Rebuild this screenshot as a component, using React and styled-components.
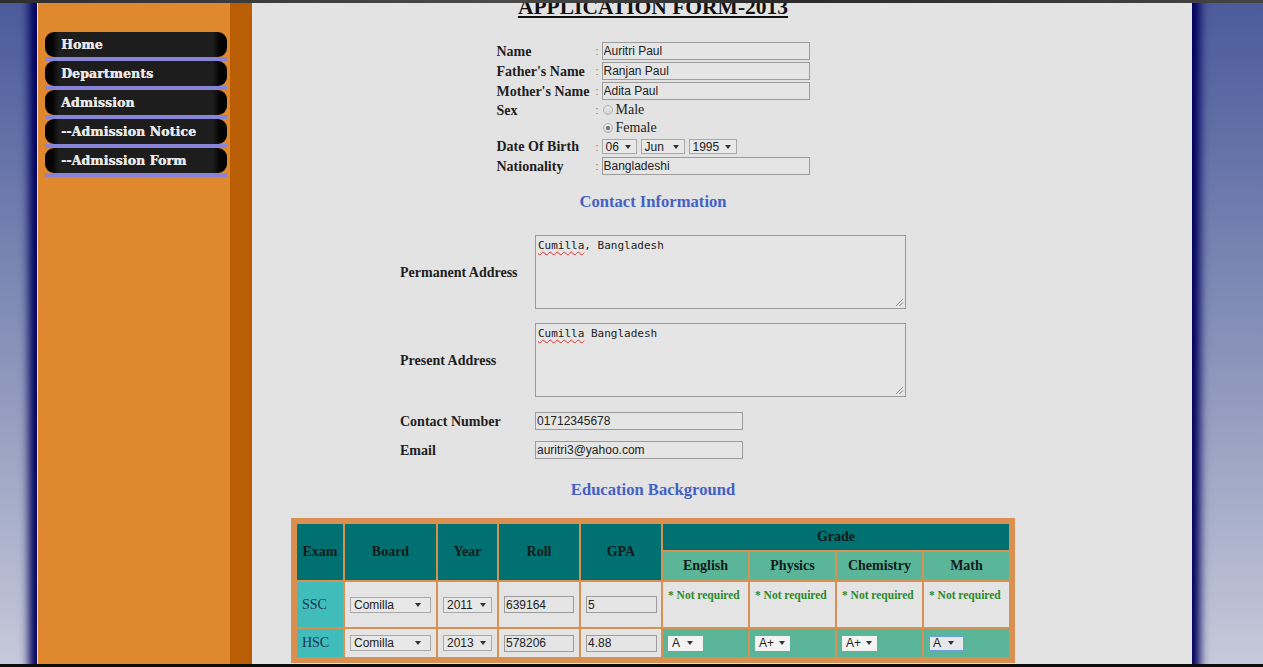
import React from 'react';
import styled, { createGlobalStyle } from 'styled-components';

const GlobalStyle = createGlobalStyle`
  html, body { margin: 0; padding: 0; }
  body {
    min-height: 100vh;
    overflow: hidden;
    background: linear-gradient(to bottom, #4a5a9b 0%, #8690b8 50%, #c6cada 100%) fixed;
    font-family: "Liberation Serif", "Times New Roman", serif;
  }
`;

const TopStrip = styled.div`
  position: fixed;
  top: 0; left: 0; right: 0;
  height: 3px;
  background: linear-gradient(to right, #2e2e2e, #4a4a4a 40%, #2a2a2a 60%, #444 100%);
  z-index: 5;
`;

const BottomStrip = styled.div`
  position: fixed;
  bottom: 0; left: 0; right: 0;
  height: 3px;
  background: #0c0c0c;
  z-index: 5;
`;

const Page = styled.div`
  display: flex;
  box-sizing: border-box;
  margin-left: 37px;
  width: 1155px;
  min-height: 720px;
  border-left: 1px solid #e8ddd0;
  background: #e3e3e3;
  box-shadow: 0 0 9px 8px #00005c;
`;

const Sidebar = styled.nav`
  width: 192px;
  flex: none;
  background: #e0882e;
  border-right: 22px solid #b95e05;
`;

const Menu = styled.ul`
  list-style: none;
  margin: 0;
  padding: 32px 3px 0 7px;
`;

const MenuItem = styled.li`
  border-bottom: 4px solid #8884d8;
`;

const MenuLink = styled.a`
  display: flex;
  align-items: center;
  height: 25px;
  padding-left: 16px;
  border-radius: 9px;
  background: linear-gradient(to right, #040404 0, #040404 7px, #1d1d1d 14px, #1d1d1d calc(100% - 14px), #040404 calc(100% - 7px));
  color: #e8e8e8;
  font-family: "DejaVu Serif", serif;
  font-weight: bold;
  font-size: 12.5px;
  letter-spacing: 0.1px;
  text-shadow: 0.4px 0 0 #e8e8e8;
  text-decoration: none;
  white-space: nowrap;
`;

const Main = styled.main`
  flex: 1;
  display: flex;
  flex-direction: column;
  align-items: center;
  padding-right: 138px;
  color: #1c1c1c;
`;

const Title = styled.h1`
  margin: 0;
  font-family: "Liberation Serif", serif;
  font-weight: bold;
  font-size: 21.5px;
  line-height: 15px;
  text-decoration: underline;
  text-decoration-thickness: 2px;
  text-underline-offset: 2px;
  color: #111;
`;

const InfoGrid = styled.div`
  margin-top: 26px;
  display: flex;
  flex-direction: column;
`;

const InfoRow = styled.div`
  display: grid;
  grid-template-columns: 97px 8px 208px;
  align-items: center;
  height: ${p => p.$h}px;
`;

const Label = styled.span`
  font-weight: bold;
  font-size: 14px;
  line-height: 16px;
  padding-top: 1px;
  white-space: nowrap;
  color: #1e1e1e;
`;

const Colon = styled.span`
  padding-left: 2px;
  font-family: "Liberation Sans", Arial, sans-serif;
  font-size: 11px;
  color: #7a7a7a;
`;

const TextInput = styled.input`
  box-sizing: border-box;
  width: ${p => p.$w}px;
  height: ${p => p.$h || 18}px;
  margin: 0;
  padding: 0 2px 0 1px;
  border: 1px solid #9c9c9c;
  border-radius: 0;
  background: #e5e5e5;
  font-family: "Liberation Sans", Arial, sans-serif;
  font-size: 12px;
  color: #222;
  outline: none;
`;

const RadioOption = styled.label`
  display: inline-flex;
  align-items: center;
  padding-left: 1px;
  font-size: 14px;
  color: #222;
`;

const Radio = styled.span`
  position: relative;
  box-sizing: border-box;
  width: 10px;
  height: 10px;
  margin-right: 3px;
  border: 1px solid #b0b0b0;
  border-radius: 50%;
  background: linear-gradient(#ececec, #d2d2d2);
  &::after {
    content: "";
    display: ${p => (p.$checked ? 'block' : 'none')};
    position: absolute;
    left: 2px; top: 2px;
    width: 4px; height: 4px;
    border-radius: 50%;
    background: #6b6b6b;
  }
`;

const SelectRow = styled.div`
  display: flex;
  gap: 4px;
`;

const FakeSelect = styled.span`
  display: inline-flex;
  align-items: center;
  justify-content: space-between;
  gap: 5px;
  box-sizing: border-box;
  width: ${p => p.$w}px;
  height: ${p => p.$h || 15}px;
  padding: 0 ${p => p.$pr || 5}px 0 3px;
  border: 1px solid ${p => (p.$focus ? '#6b9fe6' : p.$plain ? '#f2f2f2' : '#a8a8a8')};
  background: ${p => (p.$plain ? '#f4f4f4' : '#e8e8e8')};
  font-family: "Liberation Sans", Arial, sans-serif;
  font-size: 12px;
  color: #222;
  white-space: nowrap;
`;

const Arrow = styled.span`
  flex: none;
  width: 0;
  height: 0;
  border-left: 3px solid transparent;
  border-right: 3px solid transparent;
  border-top: 4px solid #333;
`;

const Select = ({ children, ...rest }) => (
  <FakeSelect {...rest}>
    {children}
    <Arrow />
  </FakeSelect>
);

const SectionHeading = styled.h2`
  margin: ${p => p.$mt}px 0 0;
  font-size: 16.6px;
  line-height: 20px;
  font-weight: bold;
  color: #4561c4;
`;

const ContactGrid = styled.div`
  margin-top: 23px;
  display: flex;
  flex-direction: column;
`;

const ContactRow = styled.div`
  display: grid;
  grid-template-columns: 135px 371px;
  align-items: center;
  margin-top: ${p => p.$mt || 0}px;
`;

const TextArea = styled.div`
  position: relative;
  box-sizing: border-box;
  height: 74px;
  padding: 3px 2px;
  border: 1px solid #9a9a9a;
  background: #e5e5e5;
  font-family: "DejaVu Sans Mono", monospace;
  font-size: 11px;
  line-height: 13px;
  color: #222;
  white-space: pre;
`;

const Misspelled = styled.span`
  text-decoration: underline wavy #e0302a;
  text-decoration-thickness: 1px;
  text-underline-offset: 2px;
`;

const Grip = styled.svg`
  position: absolute;
  right: 1px;
  bottom: 1px;
`;

const ResizeGrip = () => (
  <Grip width="9" height="9" viewBox="0 0 9 9">
    <path d="M1 8 L8 1 M4.5 8 L8 4.5" stroke="#8a8a8a" strokeWidth="1" fill="none" />
  </Grip>
);

const EduTable = styled.table`
  margin-top: 18px;
  width: 724px;
  table-layout: fixed;
  border-collapse: separate;
  border-spacing: 2px;
  border: 4px solid #d99050;
  background: #d99050;
`;

const Col = styled.col`
  width: ${p => p.$w}px;
`;

const Th = styled.th`
  box-sizing: border-box;
  height: ${p => p.$h}px;
  padding: 0;
  background: ${p => (p.$sub ? '#5bb598' : '#007170')};
  font-size: 14px;
  font-weight: bold;
  color: #141a1a;
  text-align: center;
  vertical-align: middle;
`;

const Td = styled.td`
  box-sizing: border-box;
  height: ${p => p.$h}px;
  padding: ${p => (p.$top ? '5px 5px 0' : '0 5px')};
  background: ${p => p.$bg || '#e4e4e4'};
  vertical-align: ${p => (p.$top ? 'top' : 'middle')};
  font-size: 14px;
  color: #1d3550;
  white-space: nowrap;
`;

const NotRequired = styled.span`
  font-size: 11.5px;
  font-weight: bold;
  color: #2b8a2b;
`;

const menu = ['Home', 'Departments', 'Admission', '--Admission Notice', '--Admission Form'];
const subjects = ['English', 'Physics', 'Chemistry', 'Math'];
const hscGrades = ['A', 'A+', 'A+', 'A'];

export default function App() {
  return (
    <>
      <GlobalStyle />
      <TopStrip />
      <Page>
        <Sidebar>
          <Menu>
            {menu.map(m => (
              <MenuItem key={m}>
                <MenuLink href="#">{m}</MenuLink>
              </MenuItem>
            ))}
          </Menu>
        </Sidebar>
        <Main>
          <Title>APPLICATION FORM-2013</Title>

          <InfoGrid>
            <InfoRow $h={20}>
              <Label>Name</Label><Colon>:</Colon>
              <TextInput $w={208} readOnly defaultValue="Auritri Paul" />
            </InfoRow>
            <InfoRow $h={20}>
              <Label>Father's Name</Label><Colon>:</Colon>
              <TextInput $w={208} readOnly defaultValue="Ranjan Paul" />
            </InfoRow>
            <InfoRow $h={20}>
              <Label>Mother's Name</Label><Colon>:</Colon>
              <TextInput $w={208} readOnly defaultValue="Adita Paul" />
            </InfoRow>
            <InfoRow $h={18}>
              <Label>Sex</Label><Colon>:</Colon>
              <RadioOption><Radio />Male</RadioOption>
            </InfoRow>
            <InfoRow $h={18}>
              <span /><span />
              <RadioOption><Radio $checked />Female</RadioOption>
            </InfoRow>
            <InfoRow $h={19}>
              <Label>Date Of Birth</Label><Colon>:</Colon>
              <SelectRow>
                <Select $w={35}>06</Select>
                <Select $w={44}>Jun</Select>
                <Select $w={48}>1995</Select>
              </SelectRow>
            </InfoRow>
            <InfoRow $h={20}>
              <Label>Nationality</Label><Colon>:</Colon>
              <TextInput $w={208} readOnly defaultValue="Bangladeshi" />
            </InfoRow>
          </InfoGrid>

          <SectionHeading $mt={16}>Contact Information</SectionHeading>

          <ContactGrid>
            <ContactRow>
              <Label>Permanent Address</Label>
              <TextArea><Misspelled>Cumilla</Misspelled>, Bangladesh<ResizeGrip /></TextArea>
            </ContactRow>
            <ContactRow $mt={14}>
              <Label>Present Address</Label>
              <TextArea><Misspelled>Cumilla</Misspelled> Bangladesh<ResizeGrip /></TextArea>
            </ContactRow>
            <ContactRow $mt={15}>
              <Label>Contact Number</Label>
              <TextInput $w={208} readOnly defaultValue="01712345678" />
            </ContactRow>
            <ContactRow $mt={11}>
              <Label>Email</Label>
              <TextInput $w={208} readOnly defaultValue="auritri3@yahoo.com" />
            </ContactRow>
          </ContactGrid>

          <SectionHeading $mt={21}>Education Background</SectionHeading>

          <EduTable>
            <colgroup>
              {[46, 91, 59, 80, 80, 85, 85, 85, 85].map((w, i) => <Col key={i} $w={w} />)}
            </colgroup>
            <thead>
              <tr>
                <Th rowSpan={2}>Exam</Th>
                <Th rowSpan={2}>Board</Th>
                <Th rowSpan={2}>Year</Th>
                <Th rowSpan={2}>Roll</Th>
                <Th rowSpan={2}>GPA</Th>
                <Th colSpan={4} $h={26}>Grade</Th>
              </tr>
              <tr>
                {subjects.map(s => <Th key={s} $sub $h={28}>{s}</Th>)}
              </tr>
            </thead>
            <tbody>
              <tr>
                <Td $h={45} $bg="#40bcbb">SSC</Td>
                <Td><Select $w={81} $h={16} $pr={9}>Comilla</Select></Td>
                <Td><Select $w={49} $h={16}>2011</Select></Td>
                <Td><TextInput $w={70} $h={17} readOnly defaultValue="639164" /></Td>
                <Td><TextInput $w={71} $h={17} readOnly defaultValue="5" /></Td>
                {subjects.map(s => (
                  <Td key={s} $top><NotRequired>* Not required</NotRequired></Td>
                ))}
              </tr>
              <tr>
                <Td $h={28} $bg="#40bcbb">HSC</Td>
                <Td><Select $w={81} $h={16} $pr={9}>Comilla</Select></Td>
                <Td><Select $w={49} $h={16}>2013</Select></Td>
                <Td><TextInput $w={70} $h={17} readOnly defaultValue="578206" /></Td>
                <Td><TextInput $w={71} $h={17} readOnly defaultValue="4.88" /></Td>
                {hscGrades.map((g, i) => (
                  <Td key={i} $bg="#5bb598">
                    <Select $w={35} $plain={i !== 3} $focus={i === 3} $pr={g === 'A+' ? 5 : 9}>{g}</Select>
                  </Td>
                ))}
              </tr>
            </tbody>
          </EduTable>
        </Main>
      </Page>
      <BottomStrip />
    </>
  );
}
